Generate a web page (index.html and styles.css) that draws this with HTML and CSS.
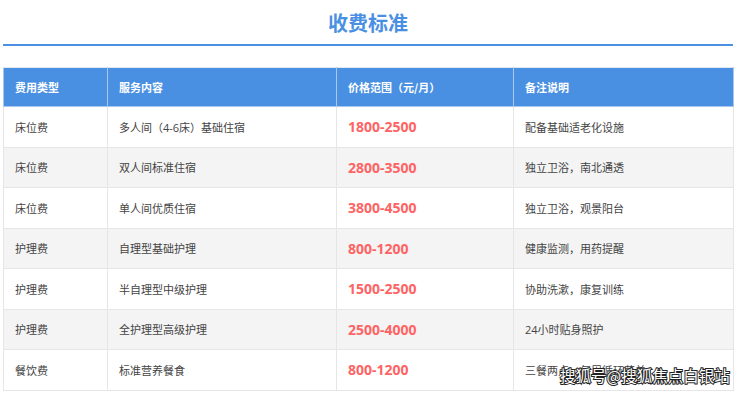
FILE: index.html
```html
<!DOCTYPE html>
<html lang="zh">
<head>
<meta charset="utf-8">
<title>收费标准</title>
<link rel="stylesheet" href="styles.css">
</head>
<body>
<div class="page">
  <h2 class="title">收费标准</h2>
  <table class="fees">
    <colgroup>
      <col class="c1"><col class="c2"><col class="c3"><col class="c4">
    </colgroup>
    <thead>
      <tr><th>费用类型</th><th>服务内容</th><th>价格范围（元/月）</th><th>备注说明</th></tr>
    </thead>
    <tbody>
      <tr><td>床位费</td><td>多人间（4-6床）基础住宿</td><td class="price">1800-2500</td><td>配备基础适老化设施</td></tr>
      <tr><td>床位费</td><td>双人间标准住宿</td><td class="price">2800-3500</td><td>独立卫浴，南北通透</td></tr>
      <tr><td>床位费</td><td>单人间优质住宿</td><td class="price">3800-4500</td><td>独立卫浴，观景阳台</td></tr>
      <tr><td>护理费</td><td>自理型基础护理</td><td class="price">800-1200</td><td>健康监测，用药提醒</td></tr>
      <tr><td>护理费</td><td>半自理型中级护理</td><td class="price">1500-2500</td><td>协助洗漱，康复训练</td></tr>
      <tr><td>护理费</td><td>全护理型高级护理</td><td class="price">2500-4000</td><td>24小时贴身照护</td></tr>
      <tr><td>餐饮费</td><td>标准营养餐食</td><td class="price">800-1200</td><td>三餐两点，每周循环菜单</td></tr>
    </tbody>
  </table>
  <div class="watermark">搜狐号@搜狐焦点白银站</div>
</div>
</body>
</html>
```
FILE: styles.css
```css
html, body {
  margin: 0;
  padding: 0;
  background: #ffffff;
}
body {
  font-family: "Open Sans", "Noto Sans CJK SC", sans-serif;
  color: #333333;
}
.page {
  position: relative;
  width: 740px;
  height: 394px;
  padding: 0 7px 0 3px;
  box-sizing: border-box;
  overflow: hidden;
}
.title {
  margin: 0;
  height: 44px;
  line-height: 46px;
  text-align: center;
  font-size: 20px;
  font-weight: 700;
  color: #4a90e2;
  border-bottom: 2px solid #4a90e2;
  font-family: "Noto Sans CJK SC", sans-serif;
}
.fees {
  margin-top: 21px;
  width: 730px;
  border-collapse: collapse;
  table-layout: fixed;
  font-size: 11px;
}
.c1 { width: 104px; }
.c2 { width: 229px; }
.c3 { width: 177px; }
.c4 { width: 220px; }
.fees th {
  background: #4a90e2;
  color: #ffffff;
  font-weight: 700;
  text-align: left;
  height: 38px;
  padding: 0 11px;
  border: 1px solid #a9c8ee;
  border-top-color: #dfe8f3;
  font-family: "Noto Sans CJK SC", sans-serif;
}
.fees td {
  height: 40.5px;
  padding: 0 11px;
  border: 1px solid #e6e6e6;
  color: #444444;
  box-sizing: border-box;
}
.fees tbody tr:nth-child(even) td {
  background: #f4f4f4;
}
.fees td.price {
  color: #ff6363;
  font-weight: 700;
  font-size: 14px;
  font-family: "Open Sans", sans-serif;
}
.watermark {
  position: absolute;
  left: 560px;
  top: 364px;
  font-size: 15.5px;
  font-weight: 400;
  color: #ffffff;
  letter-spacing: 0;
  font-family: "Noto Sans CJK SC", sans-serif;
  -webkit-text-stroke: 2px #222222;
  paint-order: stroke fill;
}
```
